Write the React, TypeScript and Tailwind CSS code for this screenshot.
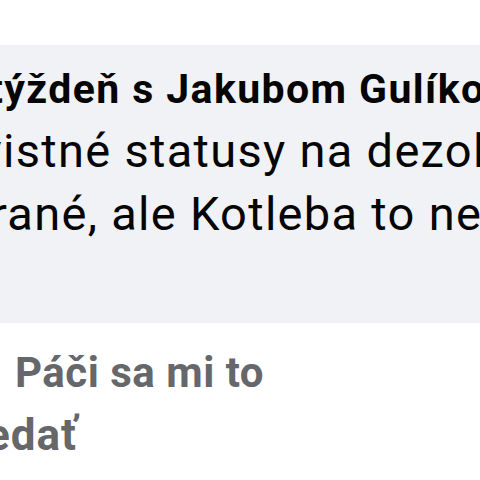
export default function App() {
  return (
    <div className="h-[480px] w-[480px] overflow-hidden bg-white font-['Roboto',sans-serif]">
      <div className="h-[45px] bg-white" />

      <div className="h-[278px] overflow-hidden bg-[#f0f2f5] pt-[20px]">
        <p className="-ml-[11px] whitespace-nowrap text-[41px] font-bold leading-[48px] tracking-[1.4px] text-[#050505]">
          týždeň s Jakubom Gulíkom
        </p>
        <div className="mt-[6px] text-[47px] leading-[63px] tracking-[1.3px] text-[#050505]">
          <p className="-ml-[21px] whitespace-nowrap">vistné statusy na dezolátorov</p>
          <p className="-ml-[9px] whitespace-nowrap">rané, ale Kotleba to nerobí</p>
        </div>
      </div>

      <div className="pt-[18px] font-bold leading-[63px] text-[#65676b]">
        <p className="ml-[15px] whitespace-nowrap text-[42px] tracking-[0.5px]">Páči sa mi to</p>
        <p className="-ml-[14px] whitespace-nowrap text-[44px] tracking-[1px]">edať</p>
      </div>
    </div>
  )
}
